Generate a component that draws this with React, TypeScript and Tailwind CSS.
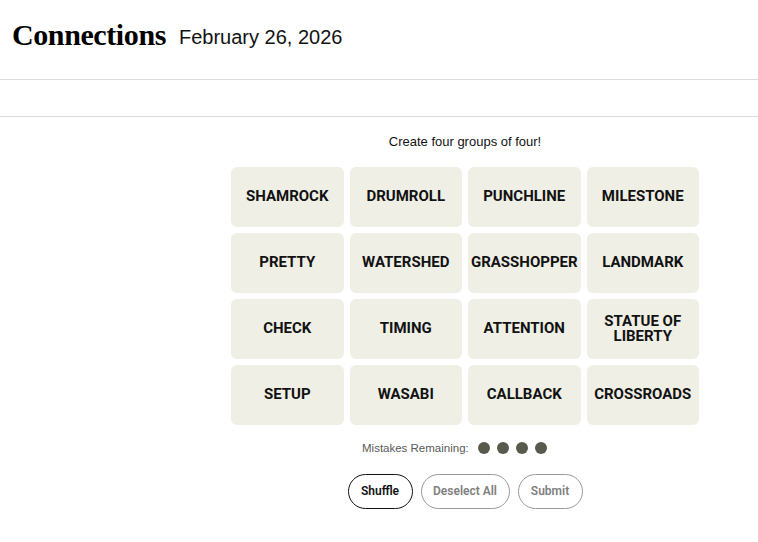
const words = [
  'SHAMROCK',
  'DRUMROLL',
  'PUNCHLINE',
  'MILESTONE',
  'PRETTY',
  'WATERSHED',
  'GRASSHOPPER',
  'LANDMARK',
  'CHECK',
  'TIMING',
  'ATTENTION',
  'STATUE OF LIBERTY',
  'SETUP',
  'WASABI',
  'CALLBACK',
  'CROSSROADS',
];

export default function App() {
  return (
    <div className="min-h-screen bg-white text-black font-['Roboto',sans-serif]">
      <header className="h-[80px] border-b border-[#dcdcdc] flex items-center px-3 gap-[13px]">
        <h1 className="whitespace-nowrap font-['Liberation_Serif',serif] font-bold text-[30px] tracking-[-0.4px] leading-none -mt-[9px]">
          Connections
        </h1>
        <span className="font-['Liberation_Sans',sans-serif] text-[20px] text-[#121212] -mt-[5px]">
          February 26, 2026
        </span>
      </header>
      <div className="h-[37px] border-b border-[#dcdcdc]" />

      <main className="ml-[231px] w-[468px] flex flex-col items-center">
        <p className="mt-[15px] text-[13px] font-['Liberation_Sans',sans-serif] text-[#121212]">
          Create four groups of four!
        </p>

        <div className="mt-[15px] grid grid-cols-4 gap-[6px] w-full">
          {words.map((w) => (
            <button
              key={w}
              className="h-[60px] rounded-[6px] bg-[#efefe6] flex items-center justify-center text-center px-1 font-bold text-[15px] leading-[15px] text-[#121212]"
            >
              {w === 'STATUE OF LIBERTY' ? (
                <span>
                  STATUE OF
                  <br />
                  LIBERTY
                </span>
              ) : (
                w
              )}
            </button>
          ))}
        </div>

        <div className="mt-[15px] self-start ml-[131px] flex items-center gap-[9px] text-[11.5px] text-[#5a5a5a] font-['Liberation_Sans',sans-serif]">
          <span>Mistakes Remaining:</span>
          <div className="flex gap-[7px]">
            {[0, 1, 2, 3].map((i) => (
              <span key={i} className="w-[12px] h-[12px] rounded-full bg-[#5a594e]" />
            ))}
          </div>
        </div>

        <div className="mt-[17px] flex gap-[8px] text-[12px] font-semibold">
          <button className="h-[35px] w-[65px] rounded-full border border-[#121212] text-[#121212]">
            Shuffle
          </button>
          <button className="h-[35px] w-[89px] rounded-full border border-[#9a9a9a] text-[#808080]">
            Deselect All
          </button>
          <button className="h-[35px] w-[65px] rounded-full border border-[#9a9a9a] text-[#808080]">
            Submit
          </button>
        </div>
      </main>
    </div>
  );
}
